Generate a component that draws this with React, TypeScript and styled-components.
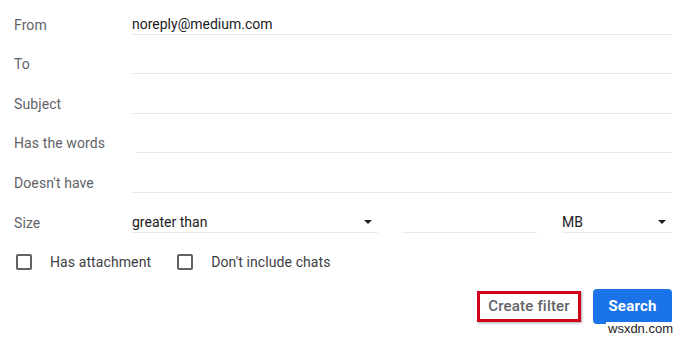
import React from "react";
import styled, { createGlobalStyle } from "styled-components";

const Global = createGlobalStyle`
  html, body { margin: 0; padding: 0; background: #fff; }
  body { font-family: Roboto, "Noto Sans", Arial, sans-serif; -webkit-font-smoothing: antialiased; }
`;

const Page = styled.div`
  position: relative;
  width: 680px;
  height: 339px;
  padding: 0 8px 0 14px;
  box-sizing: border-box;
  overflow: hidden;
`;

const Row = styled.div`
  display: grid;
  grid-template-columns: 118px 1fr;
  align-items: end;
  height: 39.6px;
  box-sizing: border-box;
  padding-bottom: 5px;
`;

const Label = styled.div`
  font-size: 14px;
  line-height: 20px;
  color: #5f6368;
  white-space: nowrap;
  letter-spacing: 0.1px;
`;

const Field = styled.div<{ $indent?: number }>`
  height: 21px;
  box-sizing: border-box;
  border-bottom: 1px solid #e8eaed;
  margin-left: ${(p) => p.$indent ?? 0}px;
  font-size: 14px;
  line-height: 20px;
  color: #202124;
`;

const SizeFields = styled.div`
  display: flex;
  align-items: flex-end;
`;

const Select = styled.div<{ $width: number; $gap?: number }>`
  width: ${(p) => p.$width}px;
  margin-left: ${(p) => p.$gap ?? 0}px;
  height: 21px;
  box-sizing: border-box;
  border-bottom: 1px solid #e8eaed;
  display: flex;
  align-items: center;
  justify-content: space-between;
  font-size: 14px;
  line-height: 20px;
  color: #202124;
  padding-right: 6px;
`;

const Arrow = styled.span`
  width: 0;
  height: 0;
  border-left: 4px solid transparent;
  border-right: 4px solid transparent;
  border-top: 4px solid #202124;
  margin-top: 1px;
`;

const CheckRow = styled.div`
  display: flex;
  align-items: center;
  height: 48px;
  padding-left: 2px;
`;

const CheckItem = styled.label`
  display: flex;
  align-items: center;
  font-size: 14px;
  color: #3c4043;
  margin-right: 26px;
  letter-spacing: 0.1px;
`;

const Box = styled.span`
  width: 16px;
  height: 16px;
  box-sizing: border-box;
  border: 2px solid #5f6368;
  border-radius: 2px;
  margin-right: 18px;
`;

const Actions = styled.div`
  display: flex;
  justify-content: flex-end;
  align-items: center;
  gap: 12px;
  margin-top: 3px;
`;

const Highlight = styled.div`
  width: 104px;
  height: 31px;
  box-sizing: border-box;
  border: 3px solid #d0021b;
  box-shadow: 1px 1px 2px rgba(0, 0, 0, 0.35);
  display: flex;
  align-items: center;
  justify-content: center;
  font-size: 15px;
  font-weight: 500;
  color: #5f6368;
  letter-spacing: 0.2px;
`;

const Primary = styled.button`
  width: 79px;
  height: 35px;
  border: none;
  border-radius: 4px;
  background: #1a73e8;
  color: #fff;
  font-family: inherit;
  font-size: 15px;
  font-weight: 700;
  letter-spacing: 0.2px;
  padding: 0;
`;

const Watermark = styled.div`
  position: absolute;
  left: 606px;
  top: 322px;
  background: #fff;
  color: #222;
  font-family: "Liberation Sans", Arial, sans-serif;
  font-size: 13px;
  line-height: 14px;
  padding: 0 2px;
`;

export default function App() {
  return (
    <>
      <Global />
      <Page>
        <Row>
          <Label>From</Label>
          <Field>noreply@medium.com</Field>
        </Row>
        <Row>
          <Label>To</Label>
          <Field />
        </Row>
        <Row>
          <Label>Subject</Label>
          <Field />
        </Row>
        <Row>
          <Label>Has the words</Label>
          <Field $indent={4} />
        </Row>
        <Row>
          <Label>Doesn't have</Label>
          <Field />
        </Row>
        <Row>
          <Label>Size</Label>
          <SizeFields>
            <Select $width={246}>
              greater than
              <Arrow />
            </Select>
            <Select $width={135} $gap={24} />
            <Select $width={110} $gap={25}>
              MB
              <Arrow />
            </Select>
          </SizeFields>
        </Row>
        <CheckRow>
          <CheckItem>
            <Box />
            Has attachment
          </CheckItem>
          <CheckItem>
            <Box />
            Don't include chats
          </CheckItem>
        </CheckRow>
        <Actions>
          <Highlight>Create filter</Highlight>
          <Primary>Search</Primary>
        </Actions>
        <Watermark>wsxdn.com</Watermark>
      </Page>
    </>
  );
}
